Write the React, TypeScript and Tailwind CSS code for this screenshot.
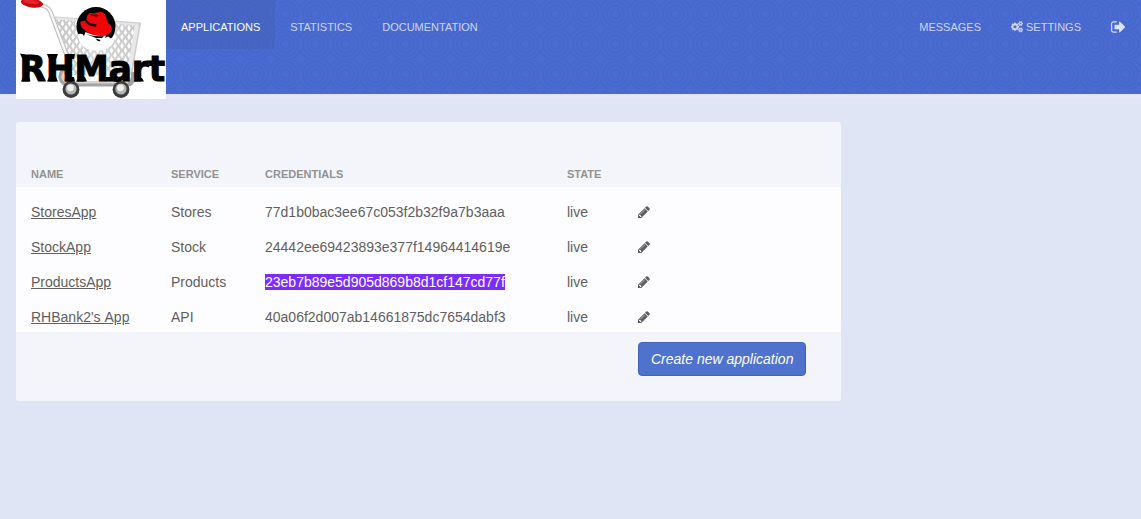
import React from 'react';

const apps = [
  { name: 'StoresApp', service: 'Stores', key: '77d1b0bac3ee67c053f2b32f9a7b3aaa' },
  { name: 'StockApp', service: 'Stock', key: '24442ee69423893e377f14964414619e' },
  { name: 'ProductsApp', service: 'Products', key: '23eb7b89e5d905d869b8d1cf147cd77f', selected: true },
  { name: "RHBank2's App", service: 'API', key: '40a06f2d007ab14661875dc7654dabf3' },
];

function Pencil() {
  return (
    <svg viewBox="0 0 1792 1792" className="-ml-px block size-3.5 fill-[#5f5f5f]">
      <path d="M491 1536l91-91-235-235-91 91v107h128v128h107zM1014 608q0-22-22-22-10 0-17 7l-542 542q-7 7-7 17 0 22 22 22 10 0 17-7l542-542q7-7 7-17zM960 416l416 416-832 832h-416v-416zM1643 512q0 53-37 90l-166 166-416-416 166-165q36-38 90-38 53 0 91 38l235 234q37 39 37 91z" />
    </svg>
  );
}

function Cogs() {
  const small =
    'v140q0 16-149 31-12 27-30 52 51 113 51 138 0 4-4 7-122 71-124 71-8 0-46-47t-52-68q-20 2-30 2t-30-2q-14 21-52 68t-46 47q-2 0-124-71-4-3-4-7 0-25 51-138-18-25-30-52-149-15-149-31v-140q0-16 149-31 13-29 30-52-51-113-51-138 0-4 4-7 4-2 35-20t59-34 30-16q8 0 46 46.5t52 67.5q20-2 30-2t30 2q51-71 92-112l6-2q4 0 124 70 4 3 4 7 0 25-51 138 17 23 30 52 149 15 149 31z';
  const hole = 'q0-52-38-90t-90-38-90 38-38 90q0 53 37.5 90.5t90.5 37.5 90.5-37.5 37.5-90.5z';
  return (
    <svg viewBox="0 0 1920 1792" className="block h-[11.5px] w-3 fill-current stroke-current stroke-40" fillRule="evenodd">
      <path d="M896 896q0-106-75-181t-181-75-181 75-75 181 75 181 181 75 181-75 75-181zM1280 805v185q0 10-7 19.5t-16 10.5l-155 24q-11 35-32 76 34 48 90 115 7 11 7 20 0 12-7 19-23 30-82.5 89.5t-78.5 59.5q-11 0-21-7l-115-90q-37 19-77 31-11 108-23 155-7 24-30 24h-186q-11 0-20-7.5t-10-17.5l-23-153q-34-10-75-31l-118 89q-7 7-20 7-11 0-21-8-144-133-144-160 0-9 7-19 10-14 41-53t47-61q-23-44-35-82l-152-24q-10-1-17-9.5t-7-19.5v-185q0-10 7-19.5t16-10.5l155-24q11-35 32-76-34-48-90-115-7-11-7-20 0-12 7-20 22-30 82-89t79-59q11 0 21 7l115 90q34-18 77-32 11-108 23-154 7-24 30-24h186q11 0 20 7.5t10 17.5l23 153q34 10 75 31l118-89q8-7 20-7 11 0 21 8 144 133 144 160 0 8-7 19-12 16-42 54t-45 60q23 48 34 82l152 23q10 2 17 10.5t7 19.5z" />
      <path d={`M1664 1408${hole}M1920 1338${small}`} />
      <path d={`M1664 384${hole}M1920 314${small}`} />
    </svg>
  );
}

function SignOut() {
  return (
    <svg viewBox="64 0 1664 1792" className="block h-4 w-[15px] fill-current">
      <path d="M704 1440q0 4 1 20t.5 26.5-3 23.5-10 19.5-20.5 6.5h-320q-119 0-203.5-84.5T64 1248V544q0-119 84.5-203.5T352 256h320q13 0 22.5 9.5T704 288q0 4 1 20t.5 26.5-3 23.5-10 19.5T672 384H352q-66 0-113 47t-47 113v704q0 66 47 113t113 47h312l11.5 1 11.5 3 8 5.5 7 9 2 13.5zM1632 896q0 26-19 45l-544 544q-19 19-45 19t-45-19-19-45v-288H512q-26 0-45-19t-19-45V704q0-26 19-45t45-19h448V352q0-26 19-45t45-19 45 19l544 544q19 19 19 45z" />
    </svg>
  );
}

function Wheel({ x }: { x: number }) {
  return (
    <g>
      <circle cx={x} cy="89.5" r="8.4" fill="#3d3d3d" />
      <circle cx={x} cy="89" r="5.6" fill="#b5b5b5" />
      <circle cx={x - 0.5} cy="87.8" r="3.4" fill="#f0f0f0" />
    </g>
  );
}

function Logo() {
  return (
    <svg viewBox="0 0 150 99" className="block h-[99px] w-[150px] shrink-0 bg-white" aria-label="RHMart">
      <defs>
        <pattern id="mesh" width="7" height="9" patternUnits="userSpaceOnUse" patternTransform="translate(1 1)">
          <rect width="7" height="9" fill="#c4c4c4" />
          <path d="M3.5 1.2L5.3 4.5 3.5 7.8 1.7 4.5zM0-3.3L1.8 0 0 3.3-1.8 0zM7-3.3L8.8 0 7 3.3 5.2 0zM0 5.7L1.8 9 0 12.3-1.8 9zM7 5.7L8.8 9 7 12.3 5.2 9z" fill="#fff" />
        </pattern>
        <linearGradient id="fade" x1="0" x2="1" y1="0" y2="0">
          <stop offset="0" stopColor="#fff" stopOpacity="0" />
          <stop offset="0.5" stopColor="#fff" stopOpacity="0.35" />
          <stop offset="1" stopColor="#fff" stopOpacity="0" />
        </linearGradient>
      </defs>
      <path d="M39 17L124 23 115 75H58z" fill="url(#mesh)" />
      <path d="M39 17L124 23 115 75H58z" fill="url(#fade)" />
      <path d="M39 17.5L124 23.5 115 75" fill="none" stroke="#cfcfcf" strokeWidth="2" />
      <path d="M40 18.5L122 24.5" fill="none" stroke="#e6e6e6" strokeWidth="2" />
      <path d="M121 25L113 72" fill="none" stroke="#e9e9e9" strokeWidth="4" />
      <path d="M24 4.5L30 7Q33 8.5 34.5 12L55 67" fill="none" stroke="#bdbdbd" strokeWidth="4.4" />
      <path d="M24 4.5L30 7Q33 8.5 34.5 12L55 67" fill="none" stroke="#fafafa" strokeWidth="2.2" />
      <path d="M54 69Q44 70 45 78Q46 84 55 84H112Q117 84 118 72" fill="none" stroke="#a3a3a3" strokeWidth="5" />
      <path d="M54 70Q46 71 46.5 78Q48 82.5 55 82.5H112" fill="none" stroke="#d6d6d6" strokeWidth="2" />
      <Wheel x={55} />
      <Wheel x={105} />
      <ellipse cx="16" cy="3" rx="11.2" ry="4.5" transform="rotate(8 16 3)" fill="#c90812" />
      <ellipse cx="15" cy="1.8" rx="8" ry="2" transform="rotate(8 15 2)" fill="#e5232b" />
      <path d="M62 33Q62 42 67 46Q73 51 82 50Q91 49 96 42L99 37 91 30 70 28z" fill="#fff" />
      <circle cx="80" cy="26.5" r="19.5" fill="#000" />
      <path d="M62 34Q67 33 68 36L69.5 32Q78 36 90 35.5L89 38 92 36.5 95 38.5 99 37Q98 46 89 49.5Q80 52 71 48.5Q63 44 62 34z" fill="#fff" />
      <path d="M70 34Q78 37 88 36L86 38 80 38zM80 38.5L84.5 40 83.5 41.5 81 40.5z" fill="#000" />
      <path d="M64.5 24Q63.5 21 67.5 21L70 20.5L71.5 15.5Q73 12 78 13.5Q81 11.5 85.5 12Q90 13 91.5 22.5Q96 25 96 29.5Q94.5 36 85 36Q75 35.5 69 30.5Q65 27.5 64.5 24z" fill="#f00508" />
      <path d="M70 19.5Q74 24 80.5 24.5L80 26.8Q72 26 69.5 22zM74 14.5Q79 14 84 15.5L80 16.5Q76 16 74 14.5z" fill="#000" />
      <text
        transform="translate(3.5 81) scale(1.12 1)"
        fill="#000"
        stroke="#000"
        strokeWidth="1.1"
        fontFamily="'DejaVu Sans', sans-serif"
        fontWeight="700"
        fontSize="36"
        textLength="130"
        lengthAdjust="spacingAndGlyphs"
      >
        RHMart
      </text>
      <path d="M4 53.5L9 54.5V59L6 58zM5 81.5L7 77H13L14.5 81.5zM31 54H42L40 59H33zM31 81.5L33 77H40L42 81.5zM49 54H59L58 59H51zM49 81.5L51 77H58L59 81.5zM60 81.5L63 77H69L71 81.5zM90 77H96L99 81.5H89zM118 81.5L120 78H126L128 81.5z" fill="#000" />
    </svg>
  );
}

const navLink = 'flex h-[49px] items-center px-[15px] pt-[5px]';

export default function App() {
  return (
    <div className="min-h-screen bg-[#e0e5f5] font-['Liberation_Sans',Arial,sans-serif] text-sm leading-5 text-[#606060]">
      <header className="h-[94px] bg-[#4a6bd1] bg-[radial-gradient(circle_at_15.5px_14px,transparent_0_3px,rgba(40,70,155,.09)_4px_5px,transparent_6px_7px,rgba(40,70,155,.09)_8px_9px,transparent_10px_11px,rgba(40,70,155,.09)_12px_13px,transparent_14px_15px,rgba(40,70,155,.09)_16px_17px,transparent_18px)] bg-size-[30px_30px] pr-[15px] pl-4">
        <div className="flex items-start">
          <Logo />
          <nav className="flex flex-1 text-[11px] uppercase text-[#cdd6f3]">
            <a className={`${navLink} bg-[#4460b5]/50 text-white`}>Applications</a>
            <a className={navLink}>Statistics</a>
            <a className={navLink}>Documentation</a>
            <a className={`${navLink} ml-auto`}>Messages</a>
            <a className={`${navLink} gap-[3px]`}><Cogs />Settings</a>
            <a className="flex h-[49px] items-center pl-[15px] pt-[4px] text-[#dce2f7]"><SignOut /></a>
          </nav>
        </div>
      </header>
      <div className="h-[5px] bg-[#e4e6f7]" />
      <main className="mt-[23px] ml-4 h-[279px] w-[825px] overflow-hidden rounded-[3px] bg-[#f3f5fb]">
        <table className="w-full table-fixed border-collapse text-left">
          <colgroup>
            <col className="w-[140px]" />
            <col className="w-[94px]" />
            <col className="w-[302px]" />
            <col className="w-[71px]" />
            <col />
          </colgroup>
          <thead>
            <tr className="h-[65px] align-bottom text-[11px] uppercase text-[#929292]">
              <th className="pb-[3px] pl-[15px] font-bold">Name</th>
              <th className="pb-[3px] pl-[15px] font-bold">Service</th>
              <th className="pb-[3px] pl-[15px] font-bold">Credentials</th>
              <th className="pb-[3px] pl-[15px] font-bold">State</th>
              <th />
            </tr>
          </thead>
          <tbody className="bg-[#fdfdff]">
            {apps.map((app) => (
              <tr key={app.name} className="h-[35px] align-bottom first:h-10">
                <td className="pb-[5px] pl-[15px] [word-spacing:0.8px]"><a className="underline">{app.name}</a></td>
                <td className="pb-[5px] pl-[15px]">{app.service}</td>
                <td className="pb-[5px] pl-[15px]">
                  <span className={app.selected ? 'bg-[#7b2dff] text-white' : ''}>{app.key}</span>
                </td>
                <td className="pb-[5px] pl-[15px]">live</td>
                <td className="pb-2 pl-[15px]"><Pencil /></td>
              </tr>
            ))}
          </tbody>
          <tfoot>
            <tr>
              <td colSpan={4} />
              <td className="pt-2.5 pl-[15px]">
                <button className="block h-[34px] w-[168px] rounded border border-[#4563bd] bg-[#4f73cc] pl-3 text-left whitespace-nowrap text-white italic">
                  Create new application
                </button>
              </td>
            </tr>
          </tfoot>
        </table>
      </main>
    </div>
  );
}
